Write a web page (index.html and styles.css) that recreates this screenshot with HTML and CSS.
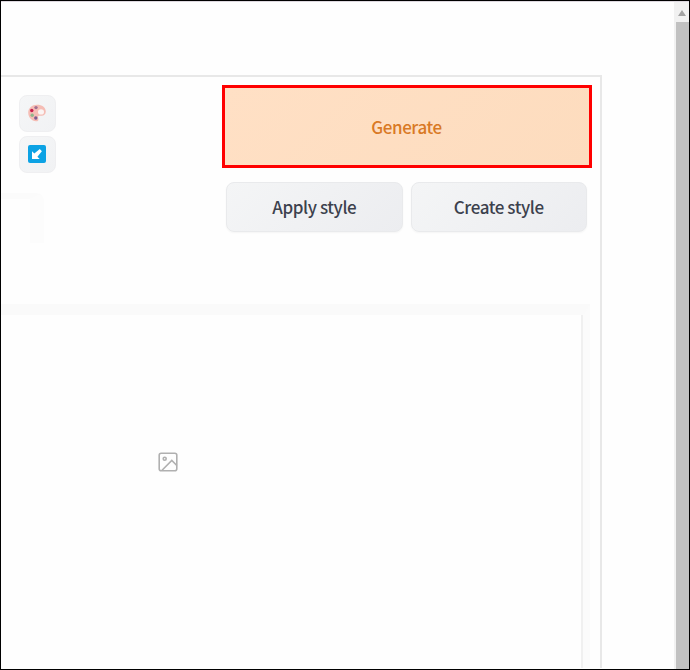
FILE: index.html
```html
<!DOCTYPE html>
<html lang="en">
<head>
<meta charset="utf-8">
<title>Generate</title>
<link rel="stylesheet" href="styles.css">
</head>
<body>
<div class="window">
  <main class="page">
    <section class="panel">
      <div class="toolbar">
        <div class="tools">
          <button class="tool" aria-label="Styles">
            <svg width="20" height="20" viewBox="0 0 20 20">
              <path fill="#f5bdb5" d="M10 1.800C5 1.800 1.200 5.200 1.200 9.500C1.200 14 4.500 18 9 18.200C12.500 18.400 11.300 15.500 11 14.200C10.800 12.800 12 12.700 14 12.800C17 13 18.800 11.300 18.800 8.600C18.800 4.500 15 1.800 10 1.800Z"/>
              <ellipse cx="14" cy="8.900" rx="3" ry="2.600" fill="#fbf4f3"/>
              <circle cx="9" cy="4.600" r="1.700" fill="#a26f91"/>
              <circle cx="4.800" cy="7.500" r="1.700" fill="#c91f4e"/>
              <circle cx="5.200" cy="12.200" r="1.700" fill="#8fb68b"/>
              <circle cx="8.800" cy="15" r="1.700" fill="#7c5b91"/>
            </svg>
          </button>
          <button class="tool" aria-label="Read parameters">
            <svg width="20" height="20" viewBox="0 0 20 20">
              <rect x="1" y="1" width="18" height="18" rx="2" fill="#0ca2e4"/>
              <path fill="#fff" d="M5 7.300V15H12.700L10.400 12.700L14.900 7.200L12.800 5.100L7.300 9.600Z"/>
            </svg>
          </button>
        </div>
        <div class="actions">
          <button class="generate">Generate</button>
          <div class="styles">
            <button class="style-button">Apply style</button>
            <button class="style-button">Create style</button>
          </div>
        </div>
      </div>
      <div class="field"></div>
      <div class="gallery">
        <div class="preview">
          <svg width="20" height="20" viewBox="0 0 20 20" fill="none" stroke="#b0b0b0" stroke-width="1.600">
            <rect x="1.200" y="1.200" width="17.600" height="17.600" rx="2"/>
            <circle cx="6.700" cy="6.700" r="1.500"/>
            <path d="M3.800 18.500L13.800 8.500L18.800 13.500"/>
          </svg>
        </div>
      </div>
    </section>
  </main>
  <div class="scrollbar"><span class="arrow"></span><span class="thumb"></span></div>
</div>
</body>
</html>
```
FILE: styles.css
```css
* { box-sizing: border-box; }
body { margin: 0; background: #fefefe; }
.window {
  display: flex;
  width: 690px;
  height: 670px;
  border: 1px solid #000;
  overflow: hidden;
  background: #fefefe;
}
.page { flex: 1; padding-top: 73px; border-top: 1px solid #ddd8df; }
.panel {
  width: 601px;
  height: 593px;
  display: flex;
  flex-direction: column;
  border-top: 2px solid #e8e8e8;
  border-right: 2px solid #e8e8e8;
}
.toolbar { display: flex; height: 155px; padding: 8px 8px 0 18px; justify-content: space-between; flex: none; }
.tools { display: flex; flex-direction: column; gap: 4px; padding-top: 10px; }
button {
  padding: 0;
  font-family: "Noto Sans CJK SC", "Noto Sans", sans-serif;
  font-size: 17px;
  font-weight: 500;
  letter-spacing: -0.420px;
}
.tool {
  display: flex;
  align-items: center;
  justify-content: center;
  width: 37px;
  height: 37px;
  padding: 0 1px 1px 0;
  border: 1px solid #efeff1;
  border-radius: 8px;
  background: linear-gradient(135deg, #f5f6f7, #f1f2f4);
}
.actions { width: 370px; }
.generate {
  display: block;
  width: 370px;
  height: 83px;
  padding: 0 1px 1px 0;
  border: 3px solid #f00;
  background: linear-gradient(135deg, #ffe0c5, #fddcbe);
  color: #d97925;
}
.styles { display: flex; gap: 8px; padding: 14px 5px 0 4px; }
.style-button {
  flex: 1;
  height: 50px;
  padding-bottom: 2px;
  border: 1px solid #e9eaec;
  border-radius: 8px;
  background: linear-gradient(135deg, #f4f5f6, #ecedf0);
  box-shadow: 0 1px 2px #0000000a;
  color: #3c414d;
}
.field { width: 43px; height: 50px; margin-top: -39px; flex: none; border-top: 6px solid #fbfbfb; border-right: 14px solid #fcfcfc; border-radius: 0 8px 0 0; }
.gallery { flex: 1; margin: 61px 10px 0 0; border-top: 11px solid #fafafa; border-right: 7px solid #fbfbfb; }
.preview { height: 100%; border-right: 2px solid #f0f0f0; padding: 137px 0 0 157px; }
.preview svg { display: block; }
.scrollbar { width: 15px; border-top: 1px solid #ddd8df; background: #f1f1f1; display: flex; flex-direction: column; align-items: center; padding-top: 8px; }
.arrow { border: 4.500px solid transparent; border-top: 0; border-bottom: 6px solid #a3a3a3; }
.thumb { flex: 1; width: 13px; margin: 6px 0 0 1px; background: #c1c1c1; }
```
